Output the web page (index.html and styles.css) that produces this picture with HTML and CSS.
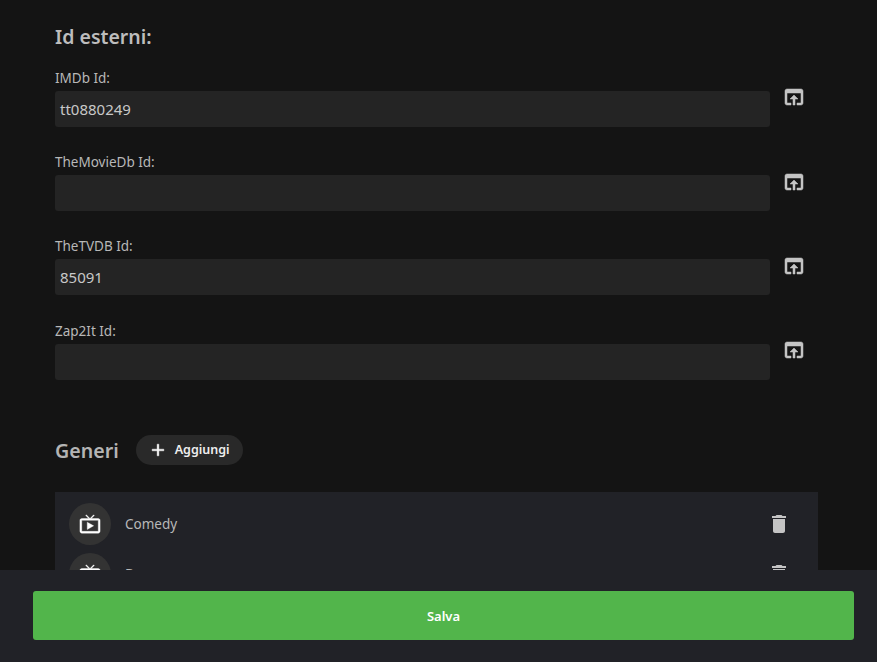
FILE: index.html
```html
<!DOCTYPE html>
<html lang="it">
<head>
<meta charset="utf-8">
<title>Id esterni</title>
<link rel="stylesheet" href="styles.css">
</head>
<body>
<main class="page">
  <h2 class="heading">Id esterni:</h2>
  <div class="id-list">
    <div class="id-row">
      <div class="field">
        <label class="label">IMDb Id:</label>
        <div class="input">tt0880249</div>
      </div>
      <button class="icon-btn"><svg viewBox="0 0 24 24" class="icon"><path d="M19 4H5c-1.11 0-2 .9-2 2v12c0 1.1.89 2 2 2h4v-2H5V8h14v10h-4v2h4c1.1 0 2-.9 2-2V6c0-1.1-.89-2-2-2zm-7 6l-4 4h3v6h2v-6h3l-4-4z"/></svg></button>
    </div>
    <div class="id-row">
      <div class="field">
        <label class="label">TheMovieDb Id:</label>
        <div class="input"></div>
      </div>
      <button class="icon-btn"><svg viewBox="0 0 24 24" class="icon"><path d="M19 4H5c-1.11 0-2 .9-2 2v12c0 1.1.89 2 2 2h4v-2H5V8h14v10h-4v2h4c1.1 0 2-.9 2-2V6c0-1.1-.89-2-2-2zm-7 6l-4 4h3v6h2v-6h3l-4-4z"/></svg></button>
    </div>
    <div class="id-row">
      <div class="field">
        <label class="label">TheTVDB Id:</label>
        <div class="input">85091</div>
      </div>
      <button class="icon-btn"><svg viewBox="0 0 24 24" class="icon"><path d="M19 4H5c-1.11 0-2 .9-2 2v12c0 1.1.89 2 2 2h4v-2H5V8h14v10h-4v2h4c1.1 0 2-.9 2-2V6c0-1.1-.89-2-2-2zm-7 6l-4 4h3v6h2v-6h3l-4-4z"/></svg></button>
    </div>
    <div class="id-row">
      <div class="field">
        <label class="label">Zap2It Id:</label>
        <div class="input"></div>
      </div>
      <button class="icon-btn"><svg viewBox="0 0 24 24" class="icon"><path d="M19 4H5c-1.11 0-2 .9-2 2v12c0 1.1.89 2 2 2h4v-2H5V8h14v10h-4v2h4c1.1 0 2-.9 2-2V6c0-1.1-.89-2-2-2zm-7 6l-4 4h3v6h2v-6h3l-4-4z"/></svg></button>
    </div>
  </div>
  <div class="section-head">
    <h2 class="section-title">Generi</h2>
    <button class="add-btn"><svg viewBox="0 0 24 24" class="plus"><path d="M19 13h-6v6h-2v-6H5v-2h6V5h2v6h6z"/></svg><span>Aggiungi</span></button>
  </div>
  <ul class="genres">
    <li class="genre">
      <span class="avatar"><svg viewBox="0 0 24 24" class="tv"><path d="M21 6h-7.59l3.29-3.29L16 2l-4 4-4-4-.71.71L10.59 6H3c-1.1 0-2 .89-2 2v12c0 1.1.9 2 2 2h18c1.1 0 2-.9 2-2V8c0-1.11-.9-2-2-2zm0 14H3V8h18v12zM9 10v8l7-4z"/></svg></span>
      <span class="genre-name">Comedy</span>
      <svg viewBox="0 0 24 24" class="trash"><path d="M6 19c0 1.1.9 2 2 2h8c1.1 0 2-.9 2-2V7H6v12zM19 4h-3.5l-1-1h-5l-1 1H5v2h14V4z"/></svg>
    </li>
    <li class="genre">
      <span class="avatar"><svg viewBox="0 0 24 24" class="tv"><path d="M21 6h-7.59l3.29-3.29L16 2l-4 4-4-4-.71.71L10.59 6H3c-1.1 0-2 .89-2 2v12c0 1.1.9 2 2 2h18c1.1 0 2-.9 2-2V8c0-1.11-.9-2-2-2zm0 14H3V8h18v12zM9 10v8l7-4z"/></svg></span>
      <span class="genre-name">Drama</span>
      <svg viewBox="0 0 24 24" class="trash"><path d="M6 19c0 1.1.9 2 2 2h8c1.1 0 2-.9 2-2V7H6v12zM19 4h-3.5l-1-1h-5l-1 1H5v2h14V4z"/></svg>
    </li>
  </ul>
</main>
<footer class="footer">
  <button class="save">Salva</button>
</footer>
</body>
</html>
```
FILE: styles.css
```css
* { box-sizing: border-box; }
html, body { height: 100%; }
body {
  margin: 0;
  overflow: hidden;
  background: #141414;
  color: #c8c8c8;
  font-family: "Noto Sans", sans-serif;
}
.page { padding: 23px 59px 0 55px; }
.heading {
  margin: 0;
  font-size: 19.5px;
  line-height: 27px;
  font-weight: 600;
  color: #bdbdbd;
}
.id-list {
  display: flex;
  flex-direction: column;
  gap: 24.33px;
  margin-top: 16.8px;
}
.id-row { display: flex; align-items: flex-start; }
.field { width: 715px; flex: none; }
.label {
  display: block;
  height: 24px;
  padding-top: 2px;
  font-size: 13.5px;
  line-height: 18px;
  color: #b8b8b8;
}
.input {
  height: 36px;
  background: #242424;
  border-radius: 3px;
  padding: 0 5px;
  font-size: 15px;
  line-height: 36px;
  color: #c8c8c8;
}
.icon-btn {
  margin: 18.4px 0 0 12px;
  width: 24px;
  height: 24px;
  padding: 0;
  border: 0;
  background: none;
  fill: #c4c4c4;
  stroke: #c4c4c4;
  stroke-width: 0.5;
}
.icon { display: block; width: 24px; height: 24px; }
.section-head {
  display: flex;
  align-items: center;
  margin-top: 54.2px;
  height: 32px;
}
.section-title {
  margin: 2px 0 0;
  font-size: 19.6px;
  font-weight: 600;
  color: #b4b4b4;
}
.add-btn {
  display: flex;
  align-items: center;
  height: 30px;
  margin-left: 17px;
  padding: 0 13px 0 12px;
  border: 0;
  border-radius: 15px;
  background: #292929;
  color: #eee;
  font-family: inherit;
  font-size: 12.5px;
  font-weight: 600;
}
.plus {
  width: 20px;
  height: 20px;
  margin-right: 7px;
  fill: #fff;
  stroke: #fff;
  stroke-width: 0.5;
}
.genres {
  list-style: none;
  margin: 26px 0 0;
  padding: 11px 14px 0;
  background: #212227;
}
.genre {
  display: flex;
  align-items: center;
  height: 42px;
  margin-bottom: 8px;
}
.avatar {
  display: flex;
  align-items: center;
  justify-content: center;
  width: 42px;
  height: 42px;
  border-radius: 50%;
  background: #333;
}
.tv {
  width: 22px;
  height: 22px;
  fill: #fff;
  stroke: #fff;
  stroke-width: 0.4;
}
.genre-name {
  flex: 1;
  margin-left: 14px;
  font-size: 13.5px;
  line-height: 18px;
  color: #b8b8b8;
}
.trash { width: 24px; height: 24px; margin-right: 13px; fill: #c4c4c4; }
.footer {
  position: fixed;
  left: 0;
  right: 0;
  bottom: 0;
  height: 92px;
  padding: 21px 23px 22px 33px;
  background: #212227;
}
.save {
  display: block;
  width: 100%;
  height: 49px;
  border: 0;
  border-radius: 3px;
  background: #52b54b;
  color: #fff;
  font-family: inherit;
  font-size: 13px;
  font-weight: 600;
}
```
